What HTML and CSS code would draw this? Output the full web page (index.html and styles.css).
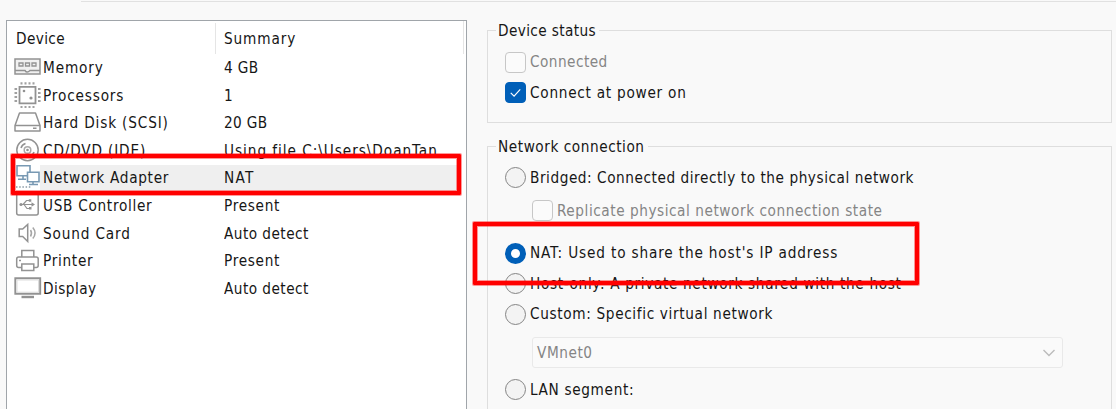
FILE: index.html
```html
<!DOCTYPE html>
<html lang="en">
<head>
<meta charset="utf-8">
<title>Virtual Machine Settings</title>
<link rel="stylesheet" href="styles.css">
</head>
<body>
<div class="tab-edge"></div>
<main class="dialog">
  <section class="devices">
    <div class="header"><span class="head-device">Device</span><span class="head-summary">Summary</span></div>
    <div class="row">
      <svg class="icon" viewBox="0 0 28 28"><path d="M1 5h25v15H1zM1 16.500h10q2 3 5 0h10" fill="#f1f1f1" stroke="#929292" stroke-width="1.500"/><path d="M5 9h4v3H5zM11.500 9h4v3h-4zM18 9h4v3h-4z" fill="none" stroke="#929292" stroke-width="1.300"/></svg>
      <span class="name wider">Memory</span><span class="summary tight">4 GB</span></div>
    <div class="row">
      <svg class="icon" viewBox="0 0 28 28"><path d="M5.500 4.800h16v16.500h-16z" fill="#fff" stroke="#929292" stroke-width="1.800"/><path d="M6.500 1.300h15M6.500 25h15" stroke="#a0a0a0" stroke-width="2.200" stroke-dasharray="2 2"/><path d="M1.800 6v15M25.300 6v15" stroke="#a0a0a0" stroke-width="2.600" stroke-dasharray="2 2"/><circle cx="10" cy="9" r="1.300" fill="#929292"/><circle cx="17" cy="16" r="1.600" fill="#929292"/></svg>
      <span class="name wider">Processors</span><span class="summary">1</span></div>
    <div class="row">
      <svg class="icon" viewBox="0 0 28 28"><path d="M5.500 4h16l4.500 12.500v5.500H1v-5.500zM1 16.500h25M19 19.300h3.500" fill="none" stroke="#929292" stroke-width="1.500" stroke-linejoin="round"/></svg>
      <span class="name wider">Hard Disk (SCSI)</span><span class="summary tight">20 GB</span></div>
    <div class="row">
      <svg class="icon" viewBox="0 0 28 28"><g fill="none" stroke="#929292" stroke-width="1.500"><circle cx="13.500" cy="13" r="10.700"/><circle cx="13.500" cy="13" r="3.300" stroke="#aaa"/><path d="M7 11q1-3.500 4.500-4.500M20 15q-1 3.500-4.500 4.500"/></g><circle cx="13.500" cy="13" r="1.300" fill="#929292"/></svg>
      <span class="name wider">CD/DVD (IDE)</span><span class="summary widest">Using file C:\Users\DoanTan...</span></div>
    <div class="row selected">
      <svg class="icon" viewBox="0 0 28 28"><g fill="#fff" stroke="#7899b3" stroke-width="1.600"><path d="M3 1.800h13v10H3zM9 12v3M4 15.300h8"/><path d="M13.500 8.300H25v9.500H13.500zM19 18v2.500M15 20.500h9"/></g><path d="M2 23h15" stroke="#8a9aa6" stroke-width="1.300" stroke-dasharray="1.500 1.700"/></svg>
      <span class="name">Network Adapter</span><span class="summary nat-value">NAT</span></div>
    <div class="row">
      <svg class="icon" viewBox="0 0 28 28"><rect x="2.700" y="1.500" width="21.500" height="21.500" rx="2" fill="none" stroke="#929292" stroke-width="1.500"/><path d="M7 12.500h11M9 12.500l3.500-4h3M10 12.500l3 4h3" fill="none" stroke="#929292" stroke-width="1.200"/><circle cx="7" cy="12.500" r="1.600" fill="#929292"/><path d="M17.500 10.300l3.500 2.200-3.500 2.200zM14.800 7.300h2.500v2.500h-2.500zM15 15h2.500v2.500H15z" fill="#929292"/></svg>
      <span class="name">USB Controller</span><span class="summary">Present</span></div>
    <div class="row">
      <svg class="icon" viewBox="0 0 28 28"><g fill="none" stroke="#929292" stroke-width="1.500"><path d="M5.200 9h3.500l5-4.500v17l-5-5H5.200z"/><path d="M16.500 10q2 3.200 0 6.500M18.800 7.500q4.500 5.500 0 11" stroke="#a6a6a6"/></g></svg>
      <span class="name wider">Sound Card</span><span class="summary mid">Auto detect</span></div>
    <div class="row">
      <svg class="icon" viewBox="0 0 28 28"><g fill="#fff" stroke="#929292" stroke-width="1.500"><path d="M7.800 10V3.500h12V10"/><rect x="2.700" y="10" width="21.500" height="10.500" rx="2"/><path d="M7.800 17h12v6.500h-12z"/></g><path d="M5 13.500h2" stroke="#929292" stroke-width="1.300"/></svg>
      <span class="name">Printer</span><span class="summary">Present</span></div>
    <div class="row">
      <svg class="icon" viewBox="0 0 28 28"><path d="M1.300 3.200h24.900v15.600H1.300z" fill="#fff" stroke="#929292" stroke-width="1.900"/><path d="M3 5h21.500v12.200H3z" fill="none" stroke="#ddd"/><path d="M7.500 22h12.500" stroke="#929292" stroke-width="2.400"/></svg>
      <span class="name mid">Display</span><span class="summary mid">Auto detect</span></div>
  </section>

  <section class="settings">
    <div class="group status">
      <div class="legend"><span class="tight">Device status</span></div>
      <label class="option disabled"><i class="check"></i><span class="mid">Connected</span></label>
      <label class="option"><i class="check on"><svg viewBox="0 0 20 20"><path d="M5 10.300l3.500 3.500 6.500-7"/></svg></i><span class="wide">Connect at power on</span></label>
    </div>
    <div class="group network">
      <div class="legend"><span>Network connection</span></div>
      <label class="option bridged"><i class="radio"></i><span>Bridged: Connected directly to the physical network</span></label>
      <label class="option nested disabled"><i class="check"></i><span>Replicate physical network connection state</span></label>
      <label class="option nat"><i class="radio on"></i><span class="wider">NAT: Used to share the host's IP address</span></label>
      <label class="option"><i class="radio"></i><span class="host">Host-only: A private network shared with the host</span></label>
      <label class="option"><i class="radio"></i><span class="host">Custom: Specific virtual network</span></label>
      <div class="combo"><span>VMnet0</span><svg viewBox="0 0 14 10"><path d="M1.500 2l5.500 5.500L12.500 2"/></svg></div>
      <label class="option"><i class="radio"></i><span class="host">LAN segment:</span></label>
    </div>
  </section>
</main>
<div class="mark mark-adapter"></div>
<div class="mark mark-nat"></div>
</body>
</html>
```
FILE: styles.css
```css
* { box-sizing: border-box; }
body {
  position: relative;
  width: 1116px;
  height: 409px;
  margin: 0;
  overflow: hidden;
  background: #f9f9f9;
  color: #161616;
  font: 15.2px/20px "DejaVu Sans Condensed", "DejaVu Sans", sans-serif;
  font-stretch: condensed;
  white-space: nowrap;
}
.tab-edge { height: 2px; margin-left: 81px; border-bottom: 1px solid #e1e1e1; }
.dialog { display: flex; height: 407px; padding-left: 6px; }
.devices {
  width: 461px;
  height: 389px;
  margin-top: 18px;
  padding-left: 7px;
  background: #fff;
  border: 1px solid #a0a5aa;
  border-bottom: 0;
}
.header { display: flex; height: 33.2px; padding-top: 2px; margin-right: 2px; border-right: 1px solid #e5e5e5; }
.head-device { width: 202px; height: 31px; padding: 6px 0 0 2px; border-right: 1px solid #e5e5e5; letter-spacing: .38px; }
.head-summary { padding: 6px 0 0 8px; letter-spacing: .88px; }
.row { display: flex; align-items: center; height: 27.6px; }
.icon { width: 28px; height: 28px; flex: none; margin-right: 1px; }
.name { width: 181px; letter-spacing: .7px; }
.summary { width: 232px; overflow: hidden; letter-spacing: .7px; }
.selected { margin-right: 9px; background: linear-gradient(90deg, #fff 26px, #efefef 26px); }
.settings { width: 625px; margin-left: 20px; letter-spacing: .55px; }
.tight { letter-spacing: .38px; }
.mid { letter-spacing: .46px; }
.host { letter-spacing: .65px; }
.wide { letter-spacing: .74px; }
.wider { letter-spacing: .84px; }
.widest { letter-spacing: .95px; }
.nat-value { letter-spacing: 1.3px; }
.group { border: 1px solid #dedede; }
.status { height: 93px; margin-top: 28px; }
.network { height: 280px; margin-top: 23px; }
.legend { height: 20px; margin-top: -10px; margin-left: 8px; }
.legend span { display: inline-block; padding: 0 3px 0 2px; background: #f9f9f9; }
.option { display: flex; align-items: center; height: 30.5px; padding-left: 17px; }
.status .legend { margin-bottom: 6px; }
.check, .radio { width: 21px; height: 21px; flex: none; margin-right: 4px; border: 1px solid #858585; background: #f3f3f3; }
.check { border-radius: 4px; }
.disabled .check { border-color: #c7c7c7; background: #fbfbfb; }
.check.on { border-color: #005fb8; background: #005fb8; }
.check svg { display: block; width: 19px; height: 19px; fill: none; stroke: #fff; stroke-width: 1.2; }
.radio { border-radius: 50%; }
.radio.on { border: 6px solid #005fb8; background: #fff; }
.disabled { color: #858585; }
.bridged { margin-top: 5px; height: 31px; }
.nested { padding-left: 44px; height: 35px; }
.nat { margin-top: 10px; }
.combo {
  display: flex; align-items: center; justify-content: space-between;
  width: 531px; height: 31px; margin: 7px 0 7px 44px; padding: 2px 6px 0 4px;
  border: 1px solid #e9e9e9; border-radius: 3px; background: #fafafa; color: #858585;
}
.combo svg { width: 14px; height: 10px; fill: none; stroke: #bbb; stroke-width: 1.4; }
.mark { position: absolute; border: 4px solid #f00; border-radius: 1px; box-shadow: 0 0 0 1px rgba(255, 0, 0, .4), inset 0 0 0 1px rgba(255, 0, 0, .4); }
.mark-adapter { left: 11px; top: 154px; width: 450px; height: 41px; }
.mark-nat { left: 473px; top: 222px; width: 446px; height: 63px; }
```
